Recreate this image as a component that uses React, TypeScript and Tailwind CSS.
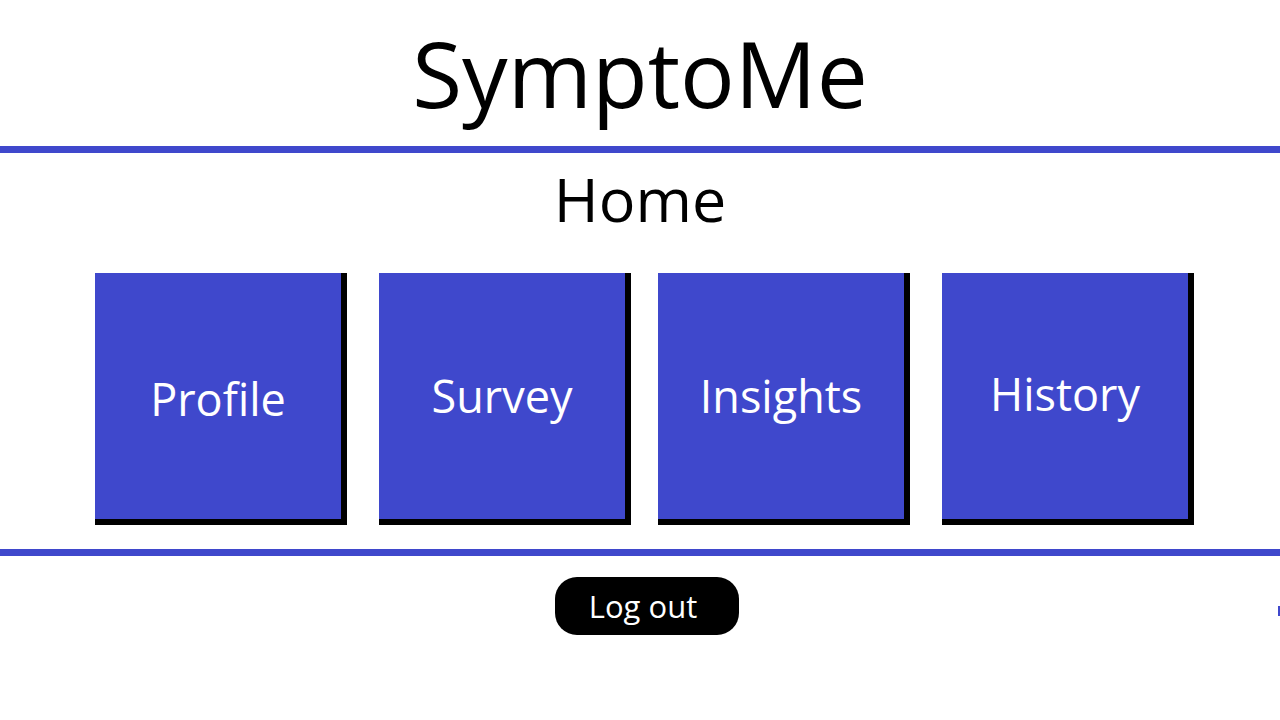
const tiles = [
  { label: 'Profile', pad: 'pt-[6px]', gap: 'mr-[32px]' },
  { label: 'Survey', pad: 'pt-0', gap: 'mr-[27px]' },
  { label: 'Insights', pad: 'pt-0', gap: 'mr-[32px]' },
  { label: 'History', pad: 'pb-[4px]', gap: 'mr-0' },
]

export default function App() {
  return (
    <main className="relative h-[720px] w-[1280px] overflow-hidden bg-white font-['Open_Sans',sans-serif] text-black">
      <header className="flex h-[146px] items-center justify-center">
        <h1 className="text-[91px] leading-none">SymptoMe</h1>
      </header>
      <div className="h-[7px] bg-[#3f48cc]" />

      <section className="flex h-[120px] items-center justify-center pb-[30px]">
        <h2 className="text-[61px] leading-none">Home</h2>
      </section>

      <div className="flex pl-[95px]">
        {tiles.map((t) => (
          <button
            key={t.label}
            className={`flex h-[252px] w-[252px] items-center justify-center border-r-[6px] border-b-[6px] border-black bg-[#3f48cc] text-[45px] text-white ${t.pad} ${t.gap}`}
          >
            {t.label}
          </button>
        ))}
      </div>

      <div className="mt-[24px] h-[7px] bg-[#3f48cc]" />

      <div className="flex justify-center pt-[21px] pl-[14px]">
        <button className="flex h-[58px] w-[184px] items-center justify-center rounded-[22px] bg-black pr-[8px] text-[31px] text-white">
          Log out
        </button>
      </div>

      <div className="absolute top-[606px] right-0 h-[10px] w-[2px] bg-[#3f48cc]" />
    </main>
  )
}
